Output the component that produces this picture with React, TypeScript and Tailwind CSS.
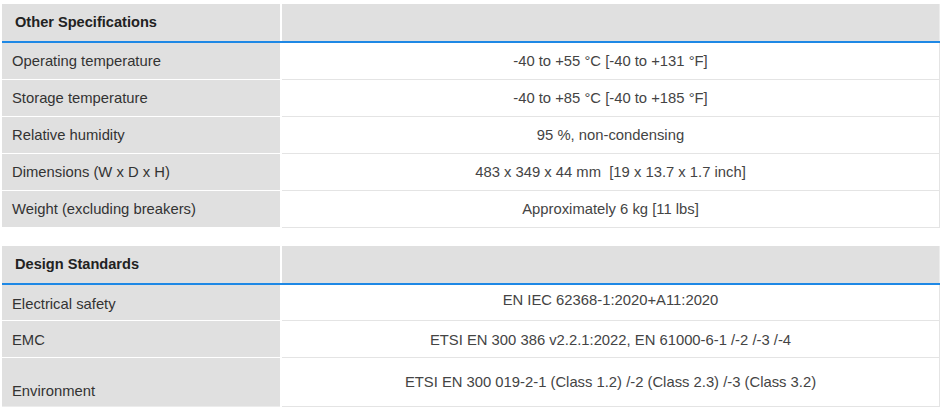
export default function App() {
  const other = [
    { label: "Operating temperature", value: "-40 to +55 °C [-40 to +131 °F]" },
    { label: "Storage temperature", value: "-40 to +85 °C [-40 to +185 °F]" },
    { label: "Relative humidity", value: "95 %, non-condensing" },
    { label: "Dimensions (W x D x H)", value: "483 x 349 x 44 mm\u00a0\u00a0[19 x 13.7 x 1.7 inch]" },
    { label: "Weight (excluding breakers)", value: "Approximately 6 kg [11 lbs]" },
  ];

  return (
    <div className="bg-white min-h-[410px] pt-[4px] pl-[2px] w-[944px] font-['Liberation_Sans',Arial,sans-serif] text-[14.8px]">
      {/* Other Specifications */}
      <div className="w-[938px]">
        <div className="flex h-[39px] border-b-2 border-[#1e88e5]">
          <div className="w-[278px] bg-[#e0e0e0] flex items-center pl-[13px] pt-[1px] font-bold text-[14.6px] text-[#222]">
            Other Specifications
          </div>
          <div className="w-[2px] bg-white" />
          <div className="flex-1 bg-[#e0e0e0] border-r border-[#ececec]" />
        </div>
        {other.map((row) => (
          <div key={row.label} className="flex h-[37px]">
            <div className="w-[278px] bg-[#e0e0e0] border-b border-white flex items-center pl-[10px] text-[#333]">
              {row.label}
            </div>
            <div className="w-[2px] bg-white" />
            <div className="flex-1 border-b border-r border-[#e4e4e4] flex items-center justify-center text-[#444]">
              {row.value}
            </div>
          </div>
        ))}
      </div>

      {/* Design Standards */}
      <div className="w-[938px] mt-[18px]">
        <div className="flex h-[39px] border-b-2 border-[#1e88e5]">
          <div className="w-[278px] bg-[#e0e0e0] flex items-center pl-[13px] pt-[1px] font-bold text-[14.6px] text-[#222]">
            Design Standards
          </div>
          <div className="w-[2px] bg-white" />
          <div className="flex-1 bg-[#e0e0e0] border-r border-[#ececec]" />
        </div>
        <div className="flex h-[36px]">
          <div className="w-[278px] bg-[#e0e0e0] border-b border-white flex items-center pl-[10px] pt-[3px] text-[#333]">
            Electrical safety
          </div>
          <div className="w-[2px] bg-white" />
          <div className="flex-1 border-b border-r border-[#e4e4e4] flex justify-center pt-[4px] text-[#444]">
            EN IEC 62368-1:2020+A11:2020
          </div>
        </div>
        <div className="flex h-[37px]">
          <div className="w-[278px] bg-[#e0e0e0] border-b border-white flex items-center pl-[10px] pt-[3px] text-[#333]">
            EMC
          </div>
          <div className="w-[2px] bg-white" />
          <div className="flex-1 border-b border-r border-[#e4e4e4] flex items-center justify-center pt-[3px] text-[#444]">
            ETSI EN 300 386 v2.2.1:2022, EN 61000-6-1 /-2 /-3 /-4
          </div>
        </div>
        <div className="flex h-[49px]">
          <div className="w-[278px] bg-[#e0e0e0] border-b border-[#ececec] flex items-end pl-[10px] pb-[4px] text-[#333]">
            Environment
          </div>
          <div className="w-[2px] bg-white" />
          <div className="flex-1 border-b border-r border-[#e4e4e4] flex items-center justify-center text-[#444]">
            ETSI EN 300 019-2-1 (Class 1.2) /-2 (Class 2.3) /-3 (Class 3.2)
          </div>
        </div>
      </div>
    </div>
  );
}
